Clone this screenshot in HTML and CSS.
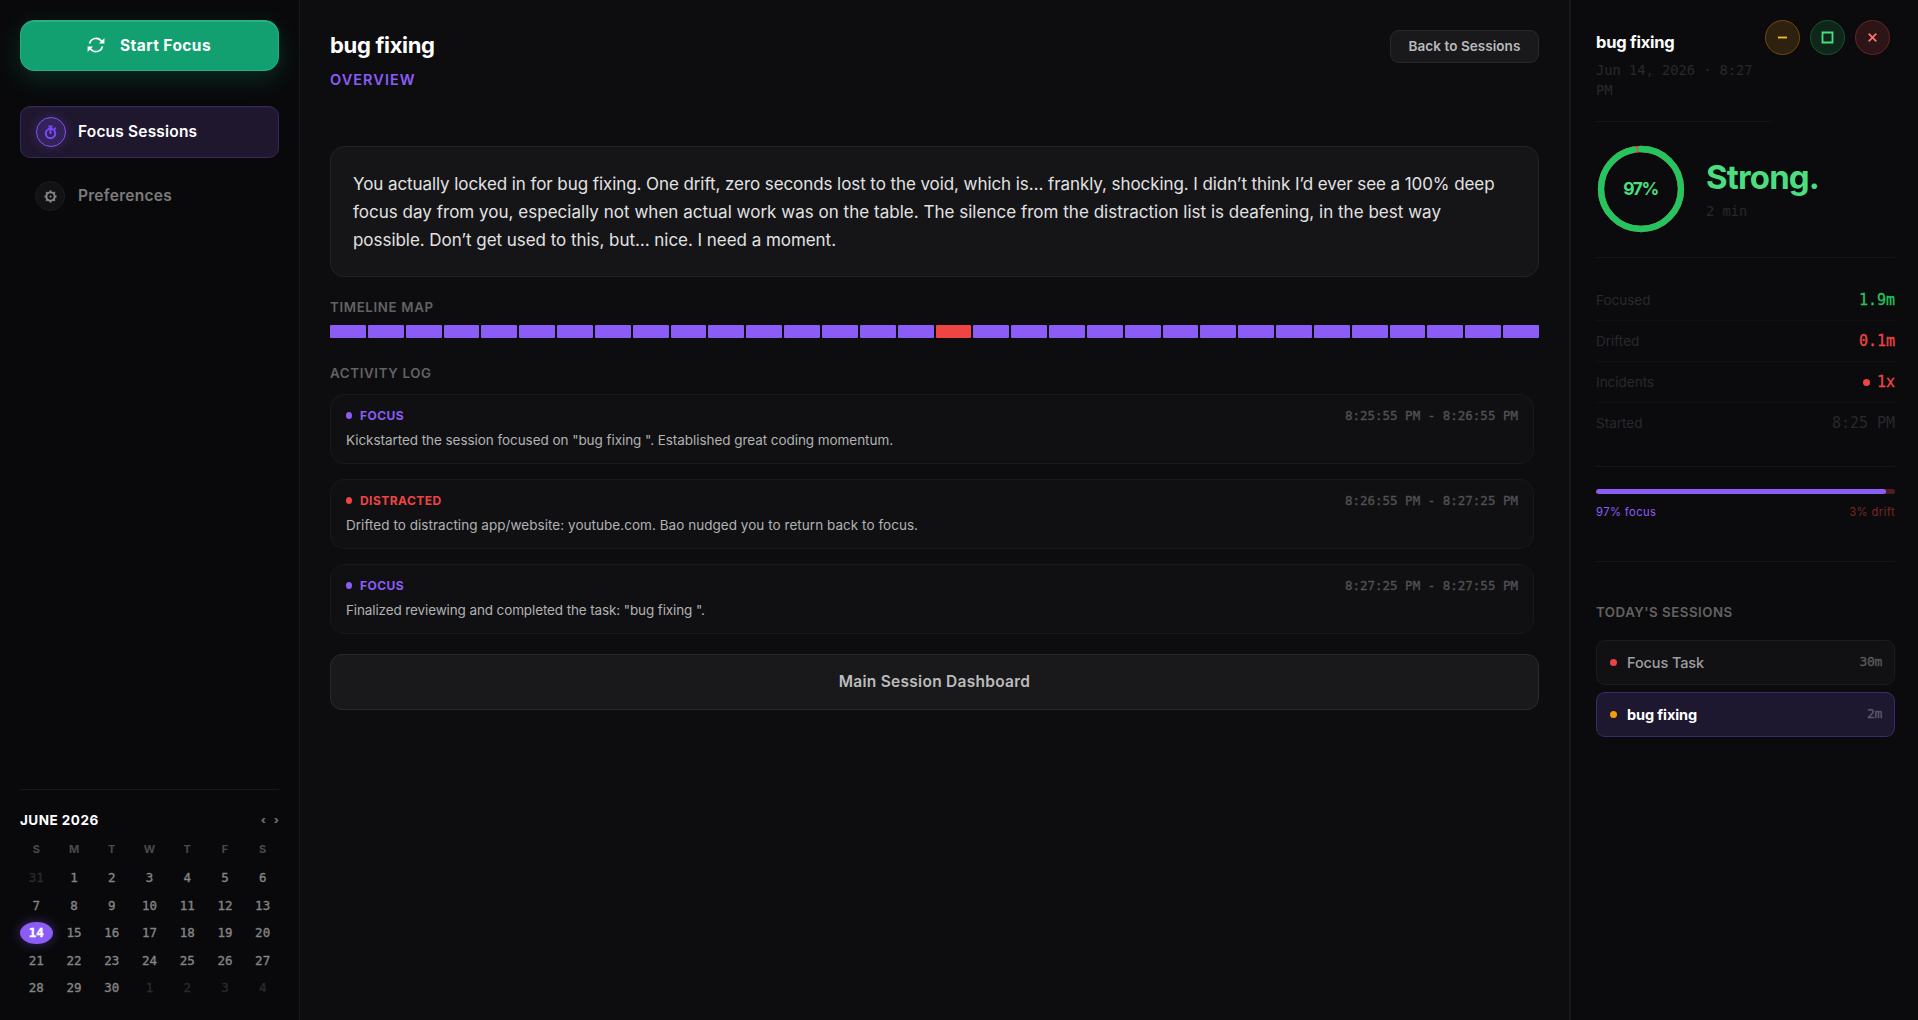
FILE: index.html
```html
<!DOCTYPE html>
<html lang="en">
<head>
<meta charset="utf-8">
<title>Focus Sessions</title>
<link rel="stylesheet" href="styles.css">
</head>
<body>
<div class="app">
  <aside class="sidebar">
    <button class="start">
      <svg class="start-icon" viewBox="0 0 18 18" fill="none" stroke="currentColor" stroke-width="1.7">
        <path d="M2.6 7.6A6.6 6.6 0 0 1 14.6 5.4M15.4 10.4A6.6 6.6 0 0 1 3.4 12.6"/>
        <path d="M17.4 2v5.4H12zM.6 16v-5.4H6z" fill="currentColor" stroke="none"/>
      </svg>
      <span>Start Focus</span>
    </button>
    <nav class="nav">
      <a class="nav-item nav-active">
        <span class="nav-icon">
          <svg viewBox="0 0 16 16" fill="none" stroke="currentColor" stroke-width="2.2">
            <circle cx="8" cy="9" r="5"/><path d="M8 9.6V4M5.8 1.6h4.4M8 1.6V4M12 4.6l1.6-1.6"/>
          </svg>
        </span>
        <span class="label-focus">Focus Sessions</span>
      </a>
      <a class="nav-item">
        <span class="nav-icon">
          <svg viewBox="0 0 16 16" fill="none" stroke="currentColor">
            <circle cx="8" cy="8" r="4.4" stroke-width="2.1"/>
            <circle cx="8" cy="8" r="1.2" fill="currentColor" stroke="none"/>
            <path stroke-width="2.2" d="M8 1.6v2M8 12.4v2M1.6 8h2M12.4 8h2M3.4 3.4L5 5M11 11l1.6 1.6M12.6 3.4L11 5M5 11l-1.6 1.6"/>
          </svg>
        </span>
        <span class="label-pref">Preferences</span>
      </a>
    </nav>
    <section class="calendar">
      <div class="cal-head"><span>JUNE 2026</span><span class="cal-arrows"><b>‹</b><b>›</b></span></div>
      <div class="cal-grid cal-week"><span>S</span><span>M</span><span>T</span><span>W</span><span>T</span><span>F</span><span>S</span></div>
      <div class="cal-grid cal-days">
        <span class="out">31</span><span>1</span><span>2</span><span>3</span><span>4</span><span>5</span><span>6</span>
        <span>7</span><span>8</span><span>9</span><span>10</span><span>11</span><span>12</span><span>13</span>
        <span class="today">14</span><span>15</span><span>16</span><span>17</span><span>18</span><span>19</span><span>20</span>
        <span>21</span><span>22</span><span>23</span><span>24</span><span>25</span><span>26</span><span>27</span>
        <span>28</span><span>29</span><span>30</span><span class="out">1</span><span class="out">2</span><span class="out">3</span><span class="out">4</span>
      </div>
    </section>
  </aside>

  <main class="main">
    <header class="head">
      <div>
        <h1>bug fixing</h1>
        <div class="overview">OVERVIEW</div>
      </div>
      <button class="back">Back to Sessions</button>
    </header>
    <div class="summary">
      <div class="line-a">You actually locked in for bug fixing. One drift, zero seconds lost to the void, which is… frankly, shocking. I didn’t think I’d ever see a 100% deep</div>
      <div class="line-b">focus day from you, especially not when actual work was on the table. The silence from the distraction list is deafening, in the best way</div>
      <div class="line-c">possible. Don’t get used to this, but… nice. I need a moment.</div>
    </div>
    <h2 class="h-timeline">TIMELINE MAP</h2>
    <div class="timeline"><i></i><i></i><i></i><i></i><i></i><i></i><i></i><i></i><i></i><i></i><i></i><i></i><i></i><i></i><i></i><i></i><i class="drift"></i><i></i><i></i><i></i><i></i><i></i><i></i><i></i><i></i><i></i><i></i><i></i><i></i><i></i><i></i><i></i></div>
    <h2 class="h-log">ACTIVITY LOG</h2>
    <div class="log">
      <article class="entry">
        <div class="entry-top"><span class="tag">FOCUS</span><time>8:25:55 PM - 8:26:55 PM</time></div>
        <p class="p-start">Kickstarted the session focused on "bug fixing ". Established great coding momentum.</p>
      </article>
      <article class="entry">
        <div class="entry-top"><span class="tag tag-red">DISTRACTED</span><time>8:26:55 PM - 8:27:25 PM</time></div>
        <p class="p-drift">Drifted to distracting app/website: youtube.com. Bao nudged you to return back to focus.</p>
      </article>
      <article class="entry">
        <div class="entry-top"><span class="tag">FOCUS</span><time>8:27:25 PM - 8:27:55 PM</time></div>
        <p class="p-final">Finalized reviewing and completed the task: "bug fixing ".</p>
      </article>
    </div>
    <button class="dash">Main Session Dashboard</button>
  </main>

  <aside class="panel">
    <div class="window-buttons">
      <span class="wb wb-min"><svg viewBox="0 0 13 13"><path d="M2 6.5h9"/></svg></span>
      <span class="wb wb-max"><svg viewBox="0 0 13 13"><path d="M1.5 1.5h10v10h-10z"/></svg></span>
      <span class="wb wb-close"><svg viewBox="0 0 13 13"><path d="M2.7 2.7l7.6 7.6M10.3 2.7l-7.6 7.6"/></svg></span>
    </div>
    <header class="p-head">
      <h3>bug fixing</h3>
      <div class="date">Jun 14, 2026 · 8:27 PM</div>
    </header>
    <section class="score">
      <div class="ring">
        <svg viewBox="0 0 90 90" fill="none" stroke-width="6.3">
          <circle cx="45" cy="45" r="40" stroke="#ef4444"/>
          <circle cx="45" cy="45" r="40" stroke="#22c55e" stroke-linecap="round" stroke-dasharray="243.8 251.3" transform="rotate(-90 45 45)"/>
        </svg>
        <span>97%</span>
      </div>
      <div class="verdict">
        <div class="strong">Strong.</div>
        <div class="mins">2 min</div>
      </div>
    </section>
    <section class="stats">
      <div class="stat"><span>Focused</span><b class="green">1.9m</b></div>
      <div class="stat"><span>Drifted</span><b class="red">0.1m</b></div>
      <div class="stat"><span>Incidents</span><b class="red incident">1x</b></div>
      <div class="stat"><span>Started</span><b>8:25 PM</b></div>
    </section>
    <section class="ratio">
      <div class="bar"><div class="fill" style="width:97%"></div></div>
      <div class="ratio-labels"><span>97% focus</span><span class="r-drift">3% drift</span></div>
    </section>
    <section class="today-list">
      <h4>TODAY'S SESSIONS</h4>
      <div class="session"><i class="dot-red"></i><span>Focus Task</span><em>30m</em></div>
      <div class="session selected"><i class="dot-amber"></i><span>bug fixing</span><em>2m</em></div>
    </section>
  </aside>
</div>
</body>
</html>
```
FILE: styles.css
```css
* { box-sizing: border-box; margin: 0; padding: 0; }
body { background: #0d0d0f; color: #fff; font-family: Inter, "Liberation Sans", sans-serif; overflow: hidden; }
button { font-family: inherit; }
h1, h2, h3, h4 { font-weight: 600; }
.app { display: grid; grid-template-columns: 300px 1269px 349px; height: 1020px; }

.sidebar { background: #09090b; border-right: 1px solid #18181a; padding: 20px 20px 0; display: flex; flex-direction: column; }
.start { height: 51px; border-radius: 14px; border: 1px solid #25b182; background: #12a070; color: #fff; display: flex; align-items: center; justify-content: center; gap: 15px; padding: 0 1px 1px 0; font-size: 15.5px; font-weight: 700; letter-spacing: .41px; box-shadow: 0 8px 24px rgba(16,185,129,.2), inset 0 1px 0 rgba(255,255,255,.14); flex: none; }
.start-icon { width: 18px; height: 18px; }
.nav { margin-top: 35px; display: flex; flex-direction: column; gap: 12px; }
.nav-item { height: 52px; display: flex; align-items: center; gap: 13px; padding-left: 15px; border-radius: 10px; color: #7b7b7c; font-size: 15.5px; font-weight: 600; }
.nav-active { padding-left: 14.5px; gap: 12.5px; color: #fff; background: #1f172e; border: 1px solid #35265b; box-shadow: inset 0 1px 0 rgba(255,255,255,.04); }
.nav-icon { width: 30px; height: 30px; border-radius: 50%; background: #121214; border: 1px solid #1e1e20; display: grid; place-items: center; color: #858586; }
.nav-icon svg { width: 15px; height: 15px; }
.nav-active .nav-icon { background: #33235a; border-color: #8253e8; color: #7a49f5; box-shadow: 0 0 12px rgba(139,92,246,.25); }
.nav-item > span:last-child { padding-bottom: 1px; }
.label-focus { letter-spacing: .18px; }
.label-pref { letter-spacing: .27px; }

.calendar { margin-top: auto; height: 231px; border-top: 1px solid #18181a; padding-top: 20px; }
.cal-head { height: 20px; display: flex; align-items: center; justify-content: space-between; font-size: 13.5px; font-weight: 700; letter-spacing: .48px; }
.cal-arrows { display: flex; gap: 8px; color: #6b6b6c; font-size: 11px; letter-spacing: 0; }
.cal-grid { display: grid; grid-template-columns: repeat(7, 1fr); column-gap: 5px; text-align: center; }
.cal-week { margin-top: 10px; line-height: 18px; font-size: 11px; font-weight: 700; color: #4a4a4b; }
.cal-days { margin-top: 9px; row-gap: 5.5px; line-height: 21px; font-size: 12.5px; font-family: "DejaVu Sans Mono", monospace; color: #848485; -webkit-text-stroke: .35px currentColor; }
.cal-days span { height: 22px; }
.cal-days .out { color: #2b2b2d; }
.cal-days .today { line-height: 22px; background: #8b5cf6; color: #fff; font-weight: 700; border-radius: 50%; box-shadow: 0 0 12px rgba(139,92,246,.4); }

.main { padding: 30px 30px 0; }
.head { height: 116px; display: flex; justify-content: space-between; align-items: flex-start; }
h1 { font-size: 22px; font-weight: 700; line-height: 31px; letter-spacing: -.32px; }
.overview { margin-top: 8px; font-size: 14.5px; font-weight: 600; line-height: 22px; letter-spacing: 1.05px; color: #8b5cf6; }
.back { width: 149px; height: 33px; border-radius: 9px; border: 1px solid #29292b; background: #19191b; color: #bababb; font-size: 13.5px; font-weight: 600; letter-spacing: .06px; padding-bottom: 1px; white-space: nowrap; }
.summary { height: 131px; border: 1px solid #232325; border-radius: 14px; background: #151517; padding: 23px 22px; color: #e2e2e3; font-size: 17px; line-height: 28px; white-space: nowrap; }
.line-a { letter-spacing: -.08px; }
.line-b { letter-spacing: .017px; }
.line-c { letter-spacing: -.043px; }
h2 { font-size: 13.3px; line-height: 20px; letter-spacing: .65px; color: #626263; }
.h-timeline { margin: 20px 0 8px; }
.timeline { display: flex; gap: 2px; height: 13px; }
.timeline i { flex: 1; background: #8b5cf6; border-radius: 1px; }
.timeline .drift { background: #ef4444; }
.h-log { margin: 25px 0 11px; }
.log { display: flex; flex-direction: column; gap: 15px; padding-right: 5px; }
.entry { height: 70px; border: 1px solid #19191b; border-radius: 14px; background: #101012; padding: 12px 15px; }
.entry-top { height: 16px; display: flex; justify-content: space-between; align-items: center; }
.tag { display: flex; align-items: center; gap: 8px; color: #8b5cf6; font-size: 12px; font-weight: 700; letter-spacing: .45px; }
.tag::before { content: ""; width: 6px; height: 7px; margin-top: 1px; border-radius: 50%; background: currentColor; }
.tag-red { color: #ef4444; }
time { font-family: "DejaVu Sans Mono", monospace; font-size: 12.5px; color: #505051; -webkit-text-stroke: .35px currentColor; }
.entry p { margin-top: 7px; font-size: 13.5px; line-height: 20px; color: #b2b2b3; }
.p-start { letter-spacing: -.057px; }
.p-drift { letter-spacing: .04px; }
.p-final { letter-spacing: -.12px; }
.dash { display: block; width: 100%; height: 56px; margin-top: 20px; padding-bottom: 2px; border: 1px solid #2a2a2c; border-radius: 12px; background: #19191b; color: #bcbcbd; font-size: 15.5px; font-weight: 600; letter-spacing: .27px; }

.panel { position: relative; background: #0b0b0d; border-left: 2px solid #18181a; padding: 31px 23px 0 25px; }
.window-buttons { position: absolute; top: 20px; right: 28px; display: flex; gap: 10px; }
.wb { width: 35px; height: 35px; border-radius: 50%; border: 1px solid; display: grid; place-items: center; }
.wb svg { width: 13px; height: 13px; fill: none; stroke: currentColor; stroke-width: 1.8; }
.wb-min { background: #2e2110; border-color: #70480f; }
.wb-min svg { stroke: #fbbf24; }
.wb-max { background: #0f261a; border-color: #15572e; }
.wb-max svg { stroke: #4ade80; }
.wb-close { background: #2d1417; border-color: #692226; }
.wb-close svg { stroke: #f87171; }
.p-head { width: 174px; height: 91px; border-bottom: 1px solid #151517; }
h3 { font-size: 16.5px; font-weight: 700; line-height: 22px; letter-spacing: -.25px; }
.date { margin-top: 7px; font: 13.7px/20px "DejaVu Sans Mono", monospace; color: #28282e; }
.score { height: 136px; display: flex; align-items: center; gap: 20px; border-bottom: 1px solid #151517; padding-bottom: 1px; }
.ring { width: 90px; height: 90px; display: grid; place-items: center; }
.ring > * { grid-area: 1 / 1; }
.ring svg { width: 90px; height: 90px; }
.ring span { color: #4ade80; font-size: 17.5px; font-weight: 700; letter-spacing: -1.5px; padding: 0 1px 1px 0; }
.verdict { padding-bottom: 3px; }
.strong { color: #4ade80; font-size: 33px; font-weight: 700; line-height: 44px; letter-spacing: -.85px; }
.mins { margin-top: 2px; font: 13.7px/20px "DejaVu Sans Mono", monospace; color: #28282e; }
.stats { padding: 22px 0; border-bottom: 1px solid #151517; }
.stat { height: 41px; display: flex; justify-content: space-between; align-items: center; border-bottom: 1px solid #111113; font-size: 13.5px; color: #28282e; }
.stat:last-child { border-bottom: 0; padding-bottom: 1px; }
.stat b { font: 15px "DejaVu Sans Mono", monospace; letter-spacing: -.03px; }
.stat .green { color: #22c55e; -webkit-text-stroke: .3px currentColor; }
.stat .red { color: #ef4444; -webkit-text-stroke: .3px currentColor; }
.incident { display: flex; align-items: center; gap: 7px; }
.incident::before { content: ""; width: 7px; height: 7px; border-radius: 50%; background: currentColor; }
.ratio { height: 95px; padding-top: 22px; border-bottom: 1px solid #151517; }
.bar { height: 5px; border-radius: 3px; background: #4e1d20; overflow: hidden; }
.fill { height: 100%; border-radius: 3px; background: #8b5cf6; }
.ratio-labels { margin-top: 10px; display: flex; justify-content: space-between; font-size: 11.2px; font-weight: 400; line-height: 16px; letter-spacing: .42px; color: #8b5cf6; }
.r-drift { color: #7a2628; }
.today-list { padding-top: 40px; display: flex; flex-direction: column; }
h4 { font-size: 13.3px; line-height: 20px; letter-spacing: .5px; color: #626263; margin-bottom: 18px; }
.session { height: 45px; margin-bottom: 7px; border: 1px solid #1c1c1e; border-radius: 9px; background: #111113; padding: 0 12px 0 13px; display: flex; align-items: center; gap: 10px; font-size: 14.5px; font-weight: 500; letter-spacing: -.11px; color: #9f9fa0; }
.session span { padding-bottom: 1px; }
.session i { width: 7px; height: 7px; border-radius: 50%; }
.session em { margin-left: auto; padding-bottom: 2px; font: 13px "DejaVu Sans Mono", monospace; letter-spacing: -.3px; color: #5a5a5b; -webkit-text-stroke: .3px currentColor; }
.selected { background: #1e1730; border-color: #3b2a6b; color: #fff; font-weight: 700; }
.selected em { color: #5f5a6b; }
.dot-red { background: #ef4444; }
.dot-amber { background: #f59e0b; }
```
